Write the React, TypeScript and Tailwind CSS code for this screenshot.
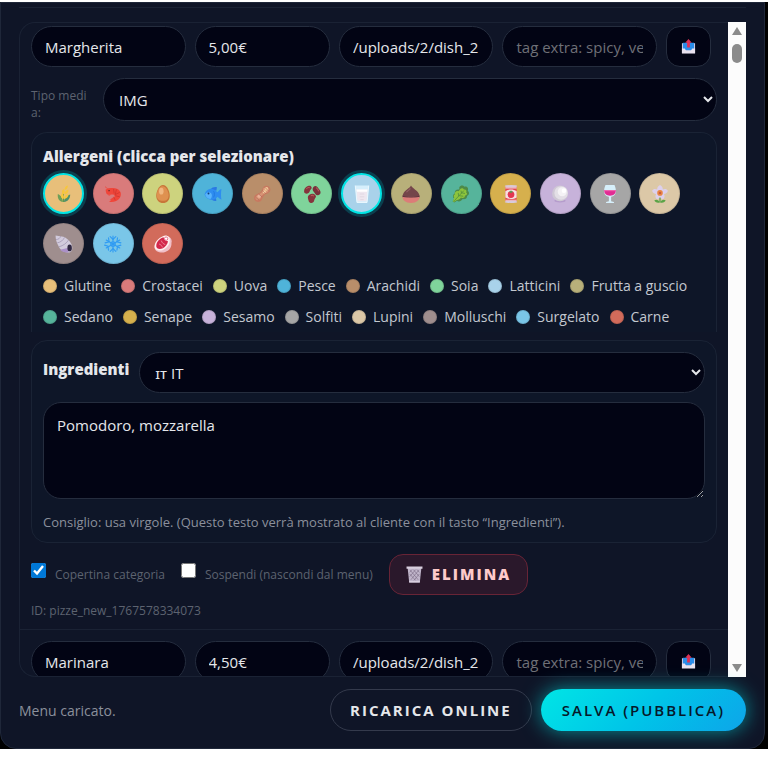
import { useState } from "react";
import type { ReactNode } from "react";

type Allergen = { id: string; label: string; bg: string; icon: ReactNode };

const ALLERGENS: Allergen[] = [
  {
    id: "glutine",
    label: "Glutine",
    bg: "bg-[#e8bf7a]",
    icon: (
      <>
        <path d="M15 30V10" stroke="#5f9a4e" strokeWidth="2" />
        <path d="M14 30C8 30 4 24 5 16c5 2 9 8 9 14z" fill="#6d9f58" />
        <path d="M16 30c6 0 11-5 11-13-6 2-11 6-11 13z" fill="#4f8f6a" />
        <path d="M15 25c-5-2-5-6-3-10 4 2 5 6 3 10zM16 25c0-5 3-8 8-9 0 5-3 8-8 9zM15 17c-4-3-3-7 0-10 3 4 3 7 0 10zM17 17c0-5 2-8 7-9 0 5-2 8-7 9zM17 9c0-4 2-7 6-8 0 4-2 7-6 8z" fill="#f7c63c" />
      </>
    ),
  },
  {
    id: "crostacei",
    label: "Crostacei",
    bg: "bg-[#d97b7b]",
    icon: (
      <>
        <path d="M3 8c6-3 15-4 21-1 6 3 8 10 4 16-3 5-9 7-15 7H9l4-4h-3l6-4c3 0 4-3 2-4-2-2-6 0-9-1-5 0-6-5-6-9z" fill="#f0463a" />
        <path d="M17 7l1 8M22 8l-2 9M28 13l-8 4M28 21l-8-2M20 27l-3-6" stroke="#c8342e" strokeWidth="1.2" fill="none" />
        <path d="M2 3c3 3 5 4 9 4M5 14c1 3 3 4 6 4" stroke="#ef4238" strokeWidth="1.5" fill="none" />
        <circle cx="9" cy="10" r="1.3" fill="#57252a" />
      </>
    ),
  },
  {
    id: "uova",
    label: "Uova",
    bg: "bg-[#cdd37e]",
    icon: (
      <>
        <path d="M16 0c7 0 12 12 12 19 0 8-5 13-12 13S4 27 4 19C4 12 9 0 16 0z" fill="#c87539" />
        <path d="M15 2c6 0 11 9 11 16 0 7-4 10-10 10-7 0-11-3-11-10C5 12 9 2 15 2z" fill="#df9150" />
        <ellipse cx="13" cy="11" rx="4" ry="6" fill="#f0b780" />
      </>
    ),
  },
  {
    id: "pesce",
    label: "Pesce",
    bg: "bg-[#4fb3d9]",
    icon: (
      <>
        <path d="M12 8c2-4 7-5 11-4l-1 6zM12 24c2 4 7 5 10 4l-1-6z" fill="#2a79e3" />
        <path d="M1 17C3 10 9 6 15 7c4 1 7 4 9 6 2-3 4-5 7-6-1 6-1 14 0 19-3-1-5-3-7-5-3 4-7 6-12 5-5-1-9-4-11-9z" fill="#2e8df0" />
        <path d="M2 17c4-6 11-5 12 1 0 3-1 6-3 7-5-1-8-4-9-8z" fill="#58b4fb" />
        <path d="M17 11c2 3 2 8 0 11" stroke="#1f78dd" strokeWidth="1.5" fill="none" />
        <circle cx="8" cy="15" r="1.7" fill="#153e76" />
      </>
    ),
  },
  {
    id: "arachidi",
    label: "Arachidi",
    bg: "bg-[#b98e6a]",
    icon: (
      <>
        <path d="M19 3c4-4 12-1 12 5 0 7-8 7-11 10-4 4-3 12-11 12-6 0-9-6-6-11 3-4 8-3 11-7 3-3 2-6 5-9z" fill="#c87960" />
        <path d="M19 5c4-3 9 0 9 4 0 5-7 5-10 8-4 4-4 9-9 10-4 0-6-4-3-7 3-4 8-4 11-8 1-2 0-5 2-7z" fill="#d79575" />
        <circle cx="24" cy="7" r="3.4" fill="#f2c796" />
        <circle cx="20" cy="12" r="2.7" fill="#f5d0a1" />
        <circle cx="11" cy="20" r="3" fill="#eab197" />
        <path d="M5 22l6 5M10 16l6 5M17 10l5 5M21 4l7 7" stroke="#a65a51" strokeWidth="1" />
      </>
    ),
  },
  {
    id: "soia",
    label: "Soia",
    bg: "bg-[#7fd49b]",
    icon: (
      <>
        <path d="M2 10C3 4 10 0 14 2c4 4-1 5-2 9-1 5-8 6-10 2z" fill="#86343d" />
        <path d="M19 3c4-3 7 1 10 5 4 5 2 10-2 10-4 1-5-2-8-6-3-3-2-7 0-9z" fill="#78303b" />
        <path d="M9 20c2-5 10-6 13-2 3 4-1 5-2 9-1 6-9 7-10 1-1-3-2-5-1-8z" fill="#86343d" />
        <path d="M6 7c2-3 4-3 6-2M23 5c2 0 4 4 5 6M14 19c2-1 4-1 5 1" stroke="#b65a58" strokeWidth="1.8" fill="none" />
      </>
    ),
  },
  {
    id: "latticini",
    label: "Latticini",
    bg: "bg-[#a9d2ea]",
    icon: (
      <>
        <path d="M4 1h24l-3 30H7z" fill="#d6effc" />
        <path d="M6 8h20l-2 21H8z" fill="#eee7ef" />
        <path d="M6 8h20l-1 4H7z" fill="#fff" />
        <path d="M4 1l3 30h18l3-30" fill="none" stroke="#f2fbff" strokeWidth="1.5" />
        <path d="M12 16h8M12 21h8M13 26h6" stroke="#d7cbd9" strokeWidth="1" />
      </>
    ),
  },
  {
    id: "frutta",
    label: "Frutta a guscio",
    bg: "bg-[#b8b07a]",
    icon: (
      <>
        <path d="M16 1c2 5 13 9 15 17 1 4-1 6-3 7H4c-3-2-4-5-2-9C5 9 14 6 16 1z" fill="#74454a" />
        <path d="M1 21h30c0 6-5 11-15 11S1 27 1 21z" fill="#dc7c78" />
        <path d="M1 20c5 2 25 2 30 0" stroke="#52303a" strokeWidth="1.5" fill="none" />
        <path d="M8 13c2-3 5-4 7-7" stroke="#926164" strokeWidth="2" fill="none" />
      </>
    ),
  },
  {
    id: "sedano",
    label: "Sedano",
    bg: "bg-[#56b49b]",
    icon: (
      <>
        <path d="M13 4c2-4 7-4 9-1 5-1 8 3 6 7 4 3 2 8-1 9 0 5-4 7-8 6-3 5-8 5-10 3l-5 3-3-2 3-5C0 21 2 16 5 15c-1-5 3-8 8-7z" fill="#4d8a48" />
        <path d="M14 8c2-3 6-3 7 0 4-1 6 3 4 5 3 2 2 5-2 6 0 4-4 5-7 3-2 4-6 4-8 5l-5 3-1-2 2-6c-2-2-1-4 1-5-1-5 3-7 7-6z" fill="#8dc43c" />
        <path d="M4 28L21 10M12 20l-1-6M13 19l7 1M17 15l-1-5M18 14l5 1" stroke="#4f8e3c" strokeWidth="1.4" />
      </>
    ),
  },
  {
    id: "senape",
    label: "Senape",
    bg: "bg-[#d6b04d]",
    icon: (
      <>
        <path d="M6 2h20v28H6z" fill="#e5484f" />
        <path d="M6 4h20v2H6zM6 26h20v2H6z" fill="#efd6df" />
        <ellipse cx="16" cy="2" rx="11" ry="2" fill="#d9c9d6" />
        <ellipse cx="16" cy="30" rx="11" ry="2" fill="#d7cbdc" />
        <path d="M6 11c6-4 14-4 20 0v11c-6 4-14 4-20 0z" fill="#f6dfe1" />
        <circle cx="16" cy="17" r="6" fill="#e33752" />
        <path d="M12 12l4 2 4-2-3-1-1-2-1 2z" fill="#4c9f54" />
      </>
    ),
  },
  {
    id: "sesamo",
    label: "Sesamo",
    bg: "bg-[#c7b2da]",
    icon: (
      <>
        <ellipse cx="16" cy="28" rx="10" ry="3" fill="#b59ccc" />
        <circle cx="16" cy="15" r="14" fill="#cfc8d5" />
        <circle cx="18" cy="14" r="12" fill="#e3dfe6" />
        <circle cx="20" cy="12" r="8" fill="#f4f2f5" />
        <circle cx="23" cy="10" r="4" fill="#fff" />
      </>
    ),
  },
  {
    id: "solfiti",
    label: "Solfiti",
    bg: "bg-[#a6a6a6]",
    icon: (
      <>
        <path d="M8 0h16c4 9 4 19-6 21v8l5 1v2H9v-2l5-1v-8C4 19 4 9 8 0z" fill="#d6effa" />
        <path d="M6 9h20c1 6-3 10-10 10S5 15 6 9z" fill="#e22c92" />
        <path d="M6 9h20v2H6z" fill="#ef68b1" />
      </>
    ),
  },
  {
    id: "lupini",
    label: "Lupini",
    bg: "bg-[#dcc8a7]",
    icon: (
      <>
        <path d="M16 20v10" stroke="#4e9b42" strokeWidth="2" />
        <path d="M16 31c-2-5-7-6-10-4 1 4 5 5 10 4zM16 31c2-5 7-6 10-4-1 4-5 5-10 4z" fill="#5ba447" />
        <path d="M16 0c4 2 5 5 5 8 4-2 7-1 9 2-1 4-4 5-7 6 2 4 1 7-1 9-3 0-5-1-6-4-1 3-3 4-6 4-2-2-3-5-1-9-3-1-6-2-7-6 2-3 5-4 9-2 0-3 1-6 5-8z" fill="#ddd0ed" />
        <circle cx="16" cy="14" r="5" fill="#e98545" />
        <circle cx="16" cy="14" r="2.2" fill="#c95b3e" />
      </>
    ),
  },
  {
    id: "molluschi",
    label: "Molluschi",
    bg: "bg-[#9f8e8e]",
    icon: (
      <>
        <path d="M1 1l8 1c8 0 15 5 19 12 5 8 3 17-4 17-9 0-15-5-18-12C3 14 1 8 1 1z" fill="#d2cbdc" />
        <path d="M2 8c4 0 7-2 8-6M4 14c6-1 11-5 13-10M7 21c8-2 14-7 17-12" fill="none" stroke="#a79db8" strokeWidth="1.6" />
        <path d="M9 26c4 4 9 5 15 5l-2-8z" fill="#ab90c8" />
        <ellipse cx="26" cy="23" rx="4" ry="6" fill="#2f2742" />
      </>
    ),
  },
  {
    id: "surgelato",
    label: "Surgelato",
    bg: "bg-[#7ac6e8]",
    icon: (
      <g stroke="#2f9bf3" strokeWidth="2" strokeLinecap="round" fill="none">
        <path d="M16 2v28M4 9l24 14M4 23L28 9" />
        <path d="M11 3l5 5 5-5M11 29l5-5 5 5M2 14l7-2-1-7M23 27l1-7 6-2M30 14l-7-2 1-7M8 27l-1-7-6-2" />
        <circle cx="16" cy="16" r="4" />
      </g>
    ),
  },
  {
    id: "carne",
    label: "Carne",
    bg: "bg-[#d26b5b]",
    icon: (
      <>
        <path d="M22 3c7-1 11 5 9 11 1 8-5 16-14 17-8 1-16-3-16-9 0-10 10-18 21-19z" fill="#f0bfc8" />
        <path d="M20 1c6 0 9 4 8 9 0 8-7 14-13 17-7 2-14-1-14-6C1 11 11 3 20 1z" fill="#fff0ef" />
        <path d="M17 4c1 5 4 7 8 7-1 6-5 10-10 13-6 2-11 0-11-4C4 12 10 6 17 4z" fill="#d3284b" />
        <path d="M9 16c3 1 5 3 6 6M13 10c1 4 4 6 7 7" stroke="#f4a1ad" strokeWidth="1.3" fill="none" />
        <circle cx="21.500" cy="6.500" r="3" fill="#fff" stroke="#e0607a" strokeWidth="1.500" />
      </>
    ),
  },
];

const DISHES = [
  { name: "Margherita", price: "5,00€", image: "/uploads/2/dish_2" },
  { name: "Marinara", price: "4,50€", image: "/uploads/2/dish_2" },
];

const FIELD =
  "w-full min-w-0 rounded-full border border-[#252d3e] bg-[#020414] px-[13px] text-[15px] text-[#e5e7eb] outline-none placeholder:text-[#6f7077]";

function OutboxIcon() {
  return (
    <svg viewBox="0 0 32 32" className="size-[15px]" aria-hidden="true">
      <path d="M2 9h28v21H2z" fill="#d9d0e4" />
      <path d="M4 8h24v16H4z" fill="#2b8de8" />
      <path d="M2 20h6l3 5h10l3-5h6v11H2z" fill="#e9e2ef" />
      <path d="M16 0l7 8h-4v10h-6V8H9z" fill="#dd3156" />
    </svg>
  );
}

function TrashIcon() {
  return (
    <svg viewBox="0 0 32 32" className="size-[17px]" aria-hidden="true">
      <path d="M3 3h26l-3 28H6z" fill="#c0b5ca" />
      <path d="M8 8l15 18M14 7l11 13M21 7l4 5M7 15l11 12M24 8L9 26M18 7L7 20M11 7l-4 5M25 15L15 27" stroke="#75667f" strokeWidth="1.1" />
      <path d="M1 1h30v4H1zM6 28h20v3H6z" fill="#d8cede" />
    </svg>
  );
}

function DishFields({ dish }: { dish: (typeof DISHES)[number] }) {
  return (
    <div className="grid grid-cols-[154fr_135fr_154fr_154fr_45px] gap-[9px] pr-[6px]">
      <input aria-label="Nome piatto" defaultValue={dish.name} className={`${FIELD} h-[41px]`} />
      <input aria-label="Prezzo" defaultValue={dish.price} className={`${FIELD} h-[41px]`} />
      <input aria-label="Immagine" defaultValue={dish.image} className={`${FIELD} h-[41px]`} />
      <input aria-label="Tag extra" placeholder="tag extra: spicy, vegan" className={`${FIELD} h-[41px]`} />
      <button
        type="button"
        aria-label="Carica immagine"
        className="flex h-[41px] items-center justify-center rounded-[14px] border border-[#252d3e] bg-[#020414]"
      >
        <OutboxIcon />
      </button>
    </div>
  );
}

function AllergenPicker() {
  const [selected, setSelected] = useState(["glutine", "latticini"]);

  function toggle(id: string) {
    setSelected((prev) => (prev.includes(id) ? prev.filter((x) => x !== id) : [...prev, id]));
  }

  return (
    <section className="mt-[11px] rounded-t-2xl border border-b-0 border-[#1a2335] bg-[#0e1628] px-[11px] pt-3">
      <h3 className="text-[15px] leading-[22px] font-extrabold text-[#e5e7eb]">Allergeni (clicca per selezionare)</h3>
      <div className="mt-[6px] grid grid-cols-13 gap-y-[9px] pr-4">
        {ALLERGENS.map((a) => (
          <button
            key={a.id}
            type="button"
            aria-label={a.label}
            aria-pressed={selected.includes(a.id)}
            onClick={() => toggle(a.id)}
            className={`flex size-[41px] items-center justify-center rounded-full ${a.bg} ${
              selected.includes(a.id)
                ? "border-2 border-[#00e5e5] shadow-[0_0_0_3px_#0b3f4e]"
                : "border border-black/10"
            }`}
          >
            <svg viewBox="0 0 32 32" className="size-[18px]" fill="none" aria-hidden="true">
              {a.icon}
            </svg>
          </button>
        ))}
      </div>
      <ul className="mt-[6px] flex flex-wrap gap-x-[10px] text-[14px] leading-[31px] text-[#c3c8d0]">
        {ALLERGENS.map((a) => (
          <li key={a.id} className="flex items-center gap-[7px]">
            <span className={`size-[14px] rounded-full border border-black/10 ${a.bg}`} />
            {a.label}
          </li>
        ))}
      </ul>
    </section>
  );
}

function Ingredients() {
  return (
    <section className="mt-[8px] rounded-2xl border border-[#1a2335] bg-[#0e1628] p-[11px] pb-[9px]">
      <div className="flex gap-[10px]">
        <label htmlFor="lang" className="pt-[6px] text-[15px] leading-[22px] font-extrabold text-[#e5e7eb]">
          Ingredienti
        </label>
        <select id="lang" className={`${FIELD} h-[41px] flex-1 pr-[5px] pl-[11px]`}>
          <option>ɪᴛ IT</option>
        </select>
      </div>
      <textarea
        aria-label="Testo ingredienti"
        defaultValue="Pomodoro, mozzarella"
        className="mt-[9px] block h-[97px] w-full rounded-[18px] border border-[#252d3e] bg-[#020414] px-[13px] py-[11px] text-[15px] leading-[22px] text-[#e5e7eb] outline-none"
      />
      <p className="mt-[12px] text-[13px] leading-[22px] text-[#8b909c]">
        Consiglio: usa virgole. (Questo testo verrà mostrato al cliente con il tasto “Ingredienti”).
      </p>
    </section>
  );
}

function Scrollbar() {
  return (
    <div className="flex w-[18px] shrink-0 flex-col items-center bg-[#fcfcfc] py-[5px]" aria-hidden="true">
      <svg viewBox="0 0 10 8" className="h-2 w-[10px]">
        <path d="M5 0l5 8H0z" fill="#8b8b8b" />
      </svg>
      <div className="mt-[9px] h-[19px] w-[10px] rounded-full bg-[#8b8b8b]" />
      <svg viewBox="0 0 10 8" className="mt-auto h-2 w-[10px]">
        <path d="M0 0h10L5 8z" fill="#8b8b8b" />
      </svg>
    </div>
  );
}

export default function App() {
  return (
    <div className="bg-white pt-[2px] font-['Open_Sans','Noto_Sans',sans-serif]">
      <div className="bg-black pr-[3px]">
        <main className="rounded-b-2xl border border-[#1f2739] bg-[#0f1527] px-[18px] pb-[17px]">
          <div className="mt-1 h-px bg-[#1a2234]" />

          <div className="mt-[14px] flex">
            <div className="min-w-0 flex-1 rounded-l-2xl border border-r-0 border-[#1a2234]">
              <article className="px-[11px] pt-[3px] pb-[8px]">
                <DishFields dish={DISHES[0]} />

                <div className="mt-[11px] flex items-center gap-[10px]">
                  <label
                    htmlFor="media"
                    className="w-[62px] shrink-0 pt-2 text-[12px] leading-[17px] break-all text-[#5d6370]"
                  >
                    Tipo media:
                  </label>
                  <select id="media" className={`${FIELD} h-[43px] flex-1 pr-[5px] pl-[11px]`}>
                    <option>IMG</option>
                    <option>VIDEO</option>
                  </select>
                </div>

                <AllergenPicker />
                <Ingredients />

                <div className="mt-[11px] flex items-center">
                  <input
                    id="cover"
                    type="checkbox"
                    defaultChecked
                    className="mb-2 size-[15px] accent-[#0078d7]"
                  />
                  <label htmlFor="cover" className="ml-[9px] text-[12px] text-[#5d6370]">
                    Copertina categoria
                  </label>
                  <input id="suspend" type="checkbox" className="mb-2 ml-4 size-[15px] accent-[#0078d7]" />
                  <label htmlFor="suspend" className="ml-[9px] text-[12px] text-[#5d6370]">
                    Sospendi (nascondi dal menu)
                  </label>
                  <button
                    type="button"
                    className="ml-4 flex h-[41px] items-center gap-[9px] rounded-[14px] border border-[#682436] bg-[#2a182b] px-4 text-[15px] font-extrabold tracking-[2px] text-[#fecaca]"
                  >
                    <TrashIcon />
                    ELIMINA
                  </button>
                </div>
                <p className="mt-[6px] text-[12px] leading-[20px] text-[#5d6370]">ID: pizze_new_1767578334073</p>
              </article>

              {/* the next dish is cut by the lower edge of the list */}
              <article className="h-[47px] overflow-hidden rounded-bl-2xl border-t border-[#1a2234] px-[11px] pt-[11px]">
                <DishFields dish={DISHES[1]} />
              </article>
            </div>
            <Scrollbar />
          </div>

          <footer className="mt-3 flex items-center gap-[9px]">
            <p className="mr-auto text-[14px] text-[#8b909c]">Menu caricato.</p>
            <button
              type="button"
              className="h-[42px] rounded-full border border-[#343a4c] px-[19px] text-[15px] font-bold tracking-[2px] text-[#e5e7eb]"
            >
              RICARICA ONLINE
            </button>
            <button
              type="button"
              className="h-[42px] rounded-full bg-linear-135 from-[#00e5e5] to-[#0ea5e9] px-[21px] text-[15px] font-semibold tracking-[2px] text-[#06182a] shadow-[0_0_20px_#00e5e599]"
            >
              SALVA (PUBBLICA)
            </button>
          </footer>
        </main>
      </div>
    </div>
  );
}
